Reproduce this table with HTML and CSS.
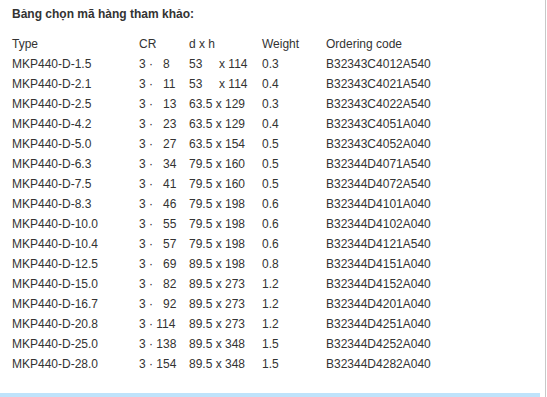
FILE: index.html
```html
<!DOCTYPE html>
<html lang="vi">
<head>
<meta charset="utf-8">
<link rel="stylesheet" href="styles.css">
</head>
<body>
<div class="panel">
  <div class="content">
    <div class="title">Bảng chọn mã hàng tham khảo:</div>
    <div class="table">
      <div class="row head"><span>Type</span><span>CR</span><span>d x h</span><span>Weight</span><span>Ordering code</span></div>
      <div class="row"><span>MKP440-D-1.5</span><span>3 ·&nbsp;&nbsp; 8</span><span>53&nbsp;&nbsp;&nbsp;&nbsp; x 114</span><span>0.3</span><span>B32343C4012A540</span></div>
      <div class="row"><span>MKP440-D-2.1</span><span>3 ·&nbsp;&nbsp; 11</span><span>53&nbsp;&nbsp;&nbsp;&nbsp; x 114</span><span>0.4</span><span>B32343C4021A540</span></div>
      <div class="row"><span>MKP440-D-2.5</span><span>3 ·&nbsp;&nbsp; 13</span><span>63.5 x 129</span><span>0.3</span><span>B32343C4022A540</span></div>
      <div class="row"><span>MKP440-D-4.2</span><span>3 ·&nbsp;&nbsp; 23</span><span>63.5 x 129</span><span>0.4</span><span>B32343C4051A040</span></div>
      <div class="row"><span>MKP440-D-5.0</span><span>3 ·&nbsp;&nbsp; 27</span><span>63.5 x 154</span><span>0.5</span><span>B32343C4052A040</span></div>
      <div class="row"><span>MKP440-D-6.3</span><span>3 ·&nbsp;&nbsp; 34</span><span>79.5 x 160</span><span>0.5</span><span>B32344D4071A540</span></div>
      <div class="row"><span>MKP440-D-7.5</span><span>3 ·&nbsp;&nbsp; 41</span><span>79.5 x 160</span><span>0.5</span><span>B32344D4072A540</span></div>
      <div class="row"><span>MKP440-D-8.3</span><span>3 ·&nbsp;&nbsp; 46</span><span>79.5 x 198</span><span>0.6</span><span>B32344D4101A040</span></div>
      <div class="row"><span>MKP440-D-10.0</span><span>3 ·&nbsp;&nbsp; 55</span><span>79.5 x 198</span><span>0.6</span><span>B32344D4102A040</span></div>
      <div class="row"><span>MKP440-D-10.4</span><span>3 ·&nbsp;&nbsp; 57</span><span>79.5 x 198</span><span>0.6</span><span>B32344D4121A540</span></div>
      <div class="row"><span>MKP440-D-12.5</span><span>3 ·&nbsp;&nbsp; 69</span><span>89.5 x 198</span><span>0.8</span><span>B32344D4151A040</span></div>
      <div class="row"><span>MKP440-D-15.0</span><span>3 ·&nbsp;&nbsp; 82</span><span>89.5 x 273</span><span>1.2</span><span>B32344D4152A040</span></div>
      <div class="row"><span>MKP440-D-16.7</span><span>3 ·&nbsp;&nbsp; 92</span><span>89.5 x 273</span><span>1.2</span><span>B32344D4201A040</span></div>
      <div class="row"><span>MKP440-D-20.8</span><span>3 · 114</span><span>89.5 x 273</span><span>1.2</span><span>B32344D4251A040</span></div>
      <div class="row"><span>MKP440-D-25.0</span><span>3 · 138</span><span>89.5 x 348</span><span>1.5</span><span>B32344D4252A040</span></div>
      <div class="row"><span>MKP440-D-28.0</span><span>3 · 154</span><span>89.5 x 348</span><span>1.5</span><span>B32344D4282A040</span></div>
    </div>
  </div>
  <div class="bar"></div>
</div>
</body>
</html>
```

FILE: styles.css
```css
html, body {
  margin: 0;
  padding: 0;
  background: #ffffff;
}
body {
  font-family: "Liberation Sans", Arial, sans-serif;
  font-size: 12px;
  color: #333333;
}
.panel {
  width: 545px;
  height: 397px;
  border-right: 1px solid #c8c8c8;
  display: flex;
  flex-direction: column;
  box-sizing: content-box;
}
.content {
  padding: 4px 0 0 12px;
  flex: 1;
}
.title {
  font-weight: bold;
  line-height: 20px;
  margin-bottom: 10px;
}
.table {
  display: flex;
  flex-direction: column;
}
.row {
  display: grid;
  grid-template-columns: 127px 50px 73px 64px auto;
  height: 20px;
  line-height: 20px;
  white-space: pre;
}
.bar {
  width: 540px;
  height: 4px;
  background: #bfe3fb;
}
```
